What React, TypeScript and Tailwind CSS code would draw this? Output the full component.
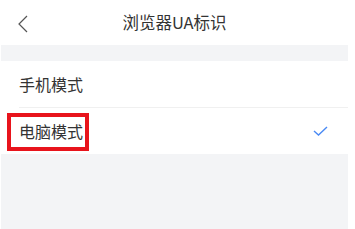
const modes = [
  { key: 'mobile', label: '手机模式', active: false },
  { key: 'desktop', label: '电脑模式', active: true },
]

export default function App() {
  return (
    <div
      className="h-[229px] w-[355px] bg-white"
      style={{ fontFamily: '"Noto Sans CJK SC", "Liberation Sans", sans-serif' }}
    >
      <div className="ml-[1px] flex h-full w-[347px] flex-col bg-[#f3f4f6]">
        <header className="relative flex h-[45px] items-center justify-center bg-white">
          <svg width="12" height="18" viewBox="0 0 12 18" className="absolute left-[16px] top-[15px]">
            <path d="M10 1 L2 9 L10 17" fill="none" stroke="#555" strokeWidth="1.2" />
          </svg>
          <h1 className="text-[16.5px] text-[#333]">浏览器UA标识</h1>
        </header>

        <div className="mt-[16px] bg-white">
          {modes.map((mode, i) => (
            <div key={mode.key} className="relative pl-[18px]">
              <div
                className={`flex h-[46.5px] items-center pr-[20px] ${
                  i < modes.length - 1 ? 'border-b border-[#f0f0f0]' : ''
                }`}
              >
                <span className="flex-1 text-[16px] text-[#333]">{mode.label}</span>
                {mode.active && (
                  <svg width="15" height="10" viewBox="0 0 15 10">
                    <path d="M1 5 L5.5 9 L14 1" fill="none" stroke="#4a8af4" strokeWidth="1.4" />
                  </svg>
                )}
              </div>
              {mode.active && (
                <div className="absolute left-[6px] top-[5px] h-[38px] w-[82px] border-[4px] border-[#e8141c]" />
              )}
            </div>
          ))}
        </div>
      </div>
    </div>
  )
}
